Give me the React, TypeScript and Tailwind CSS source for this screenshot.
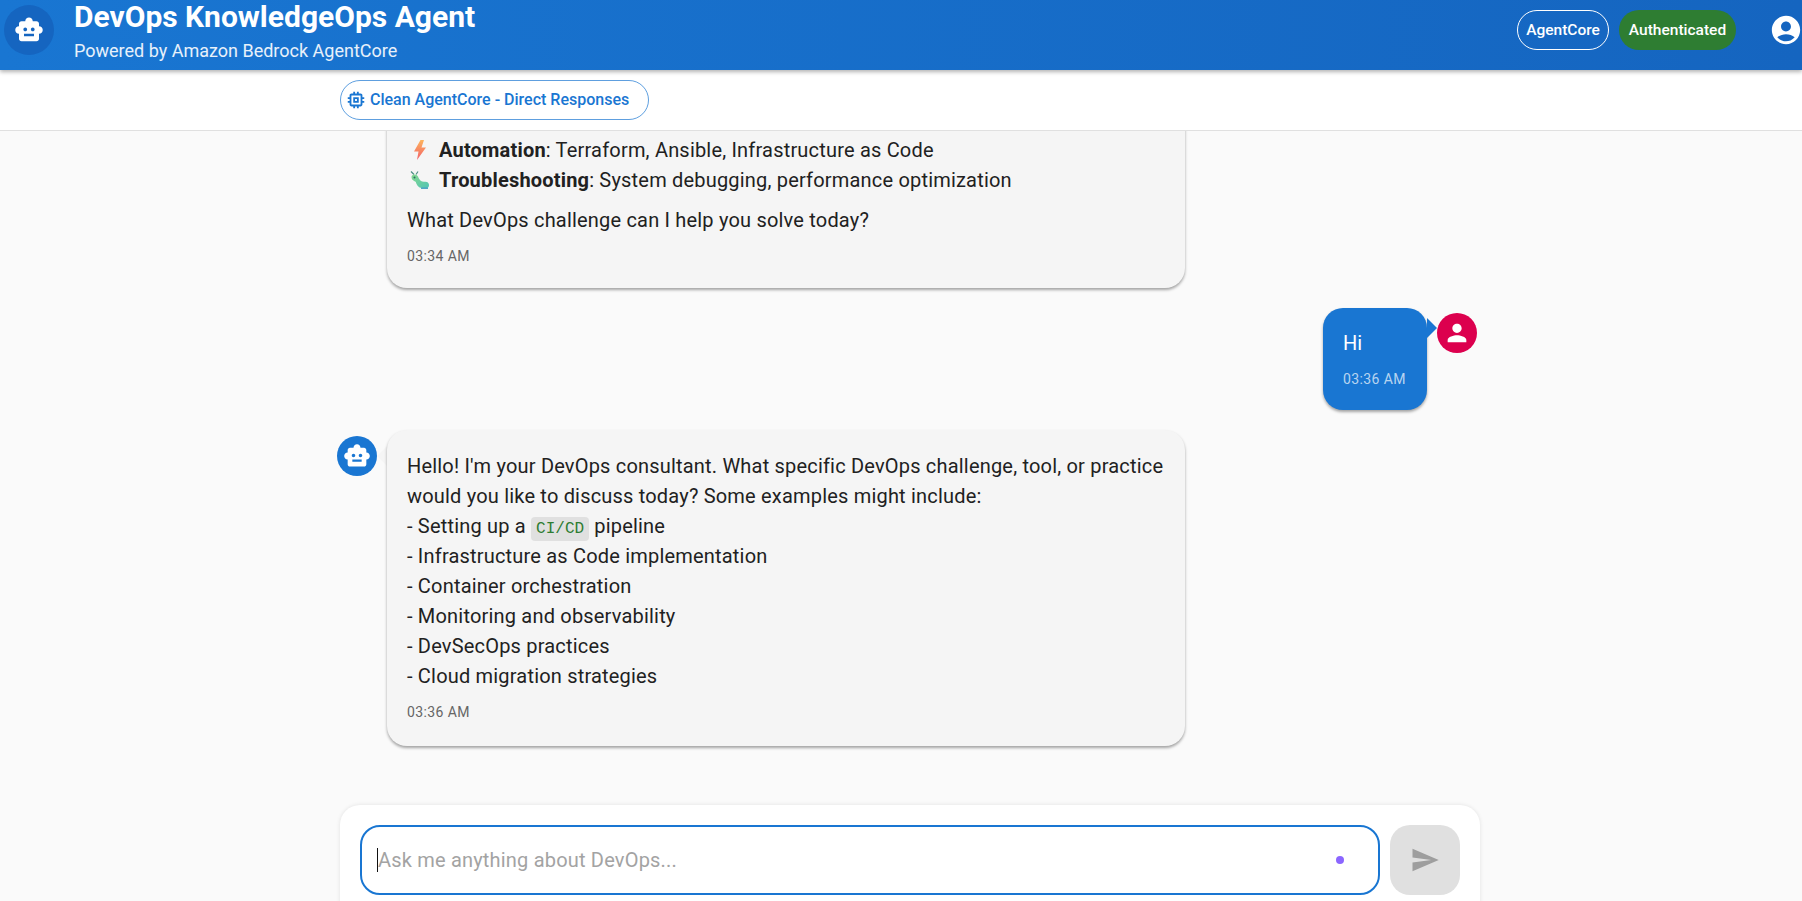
const SMART_TOY =
  "M20 9V7c0-1.1-.9-2-2-2h-3c0-1.66-1.34-3-3-3S9 3.34 9 5H6c-1.1 0-2 .9-2 2v2c-1.66 0-3 1.34-3 3s1.34 3 3 3v4c0 1.1.9 2 2 2h12c1.1 0 2-.9 2-2v-4c1.66 0 3-1.34 3-3s-1.34-3-3-3zM7.5 11.5c0-.83.67-1.5 1.5-1.5s1.5.67 1.5 1.5S9.83 13 9 13s-1.5-.67-1.5-1.5zM16 17H8v-2h8v2zm-1-4c-.83 0-1.5-.67-1.5-1.5S14.17 10 15 10s1.5.67 1.5 1.5S15.83 13 15 13z";
const PERSON =
  "M12 12c2.21 0 4-1.79 4-4s-1.79-4-4-4-4 1.79-4 4 1.79 4 4 4zm0 2c-2.67 0-8 1.34-8 4v2h16v-2c0-2.66-5.33-4-8-4z";
const ACCOUNT =
  "M12 2C6.48 2 2 6.48 2 12s4.48 10 10 10 10-4.48 10-10S17.52 2 12 2zm0 4c1.93 0 3.5 1.57 3.5 3.5S13.93 13 12 13s-3.5-1.57-3.5-3.5S10.07 6 12 6zm0 14c-2.03 0-4.43-.82-6.14-2.88C7.55 15.8 9.68 15 12 15s4.45.8 6.14 2.12C16.43 19.18 14.03 20 12 20z";
const SEND = "M2.01 21 23 12 2.01 3 2 10l15 2-15 2z";
const MEMORY =
  "M15 9H9v6h6V9zm-2 4h-2v-2h2v2zm8-2V9h-2V7c0-1.1-.9-2-2-2h-2V3h-2v2h-2V3H9v2H7c-1.1 0-2 .9-2 2v2H3v2h2v2H3v2h2v2c0 1.1.9 2 2 2h2v2h2v-2h2v2h2v-2h2c1.1 0 2-.9 2-2v-2h2v-2h-2v-2h2zm-4 6H7V7h10v10z";

function Icon({ d, className }: { d: string; className: string }) {
  return (
    <svg viewBox="0 0 24 24" fill="currentColor" className={className}>
      <path d={d} />
    </svg>
  );
}

function BoltEmoji() {
  return (
    <svg viewBox="0 0 12 20" className="w-[12px] h-[20px] shrink-0">
      <defs>
        <linearGradient id="bolt" x1="0" y1="0" x2="0" y2="1">
          <stop offset="0" stopColor="#fdb45c" />
          <stop offset="1" stopColor="#f2606a" />
        </linearGradient>
      </defs>
      <path d="M6.500 0 0 11.500h4.500L3 20 12 7.500H7.500L10 0z" fill="url(#bolt)" />
    </svg>
  );
}

function BugEmoji() {
  return (
    <svg viewBox="0 0 20 18" className="w-[20px] h-[18px] shrink-0">
      <defs>
        <linearGradient id="bug" x1="0" y1="0" x2="1" y2="1">
          <stop offset="0" stopColor="#86d98f" />
          <stop offset="1" stopColor="#52c4b4" />
        </linearGradient>
      </defs>
      <path d="M1 0.500 4 3.500M8 0.500 6 3.500" stroke="#4f8f86" strokeWidth="1.2" fill="none" />
      <path
        d="M1.500 6c0-3 5-3.600 6.500-.4.900 2 1.500 3.400 3 4.300 1.500 1 4 .400 6 1.200 2.500 1 2.700 5 .4 5.900H12c-3.600 0-5.500-3.500-6.200-6C4.400 10 1.500 9 1.500 6z"
        fill="url(#bug)"
      />
      <circle cx="4.500" cy="6.500" r="1" fill="#2d6a62" />
      <path d="M11 17.200h7" stroke="#4aa3c4" strokeWidth="1.500" />
    </svg>
  );
}

function BotBubble({ children, time, className }: { children: React.ReactNode; time: string; className?: string }) {
  return (
    <div className={`relative w-[798px] bg-[#f5f5f5] rounded-[20px] px-5 shadow-[0_2px_3px_rgba(0,0,0,0.35)] ${className ?? ""}`}>
      <div className="text-[20px] leading-[30px] tracking-[0.19px] text-[#212121]">{children}</div>
      <div className="mt-[11px] text-[14px] leading-[20px] tracking-[0.4px] text-[#666666]">{time}</div>
    </div>
  );
}

export default function App() {
  return (
    <div className="h-screen flex flex-col overflow-hidden bg-[#fafafa] font-['Roboto',sans-serif]">
      <header className="relative z-10 h-[70px] shrink-0 flex items-start pl-[4px] pr-0 pt-[5px] gap-5 text-white bg-gradient-to-r from-[#1976d2] to-[#1565c0] shadow-[0_2px_4px_rgba(0,0,0,0.3)]">
        <div className="w-[50px] h-[50px] rounded-full bg-[#1565c0] flex items-center justify-center">
          <Icon d={SMART_TOY} className="w-[30px] h-[30px] text-white" />
        </div>
        <div className="flex-1 -mt-[5px]">
          <h1 className="text-[30px] leading-[34px] font-bold">DevOps KnowledgeOps Agent</h1>
          <p className="text-[18px] leading-[20px] mt-[7px] text-white/90">Powered by Amazon Bedrock AgentCore</p>
        </div>
        <div className="flex items-center h-[50px] -mr-[1px]">
          <span className="h-[40px] w-[92px] pt-[1px] flex items-center justify-center rounded-full border border-white text-[15.5px] font-medium">AgentCore</span>
          <span className="ml-[10px] h-[40px] w-[117px] pt-[1px] flex items-center justify-center rounded-full bg-[#2e7d32] text-[15.5px] font-medium">Authenticated</span>
          <Icon d={ACCOUNT} className="ml-[33px] w-[34px] h-[34px] text-white" />
        </div>
      </header>

      <div className="h-[61px] shrink-0 bg-white border-b border-[#e0e0e0] pl-[340px] flex items-center">
        <span className="h-[40px] w-[309px] flex items-center rounded-full border border-[#1976d2]/70 pl-[4px] gap-[3px] text-[#1976d2] text-[16px] font-medium">
          <Icon d={MEMORY} className="w-[22px] h-[22px]" />
          Clean AgentCore - Direct Responses
        </span>
      </div>

      <main className="flex-1 min-h-0 overflow-hidden flex flex-col justify-end pl-[337px] pr-[325px] pb-[59px] gap-5">
        <div className="flex ml-[50px]">
          <BotBubble time="03:34 AM" className="pt-[30px] pb-[22px]">
            <div className="flex items-center">
              <span className="w-[33px] -ml-[1px] flex justify-center pr-[5px]"><BoltEmoji /></span>
              <span><b className="font-bold">Automation</b>: Terraform, Ansible, Infrastructure as Code</span>
            </div>
            <div className="flex items-center">
              <span className="w-[33px] -ml-[1px] flex justify-center pr-[5px]"><BugEmoji /></span>
              <span><b className="font-bold">Troubleshooting</b>: System debugging, performance optimization</span>
            </div>
            <p className="mt-[10px]">What DevOps challenge can I help you solve today?</p>
          </BotBubble>
        </div>

        <div className="flex justify-end items-start">
          <div className="relative w-[104px] h-[102px] bg-[#1976d2] rounded-[20px] px-5 pt-[18px] text-white shadow-[0_2px_3px_rgba(0,0,0,0.35)]">
            <div className="text-[20px] leading-[34px]">Hi</div>
            <div className="mt-[9px] text-[14px] leading-[20px] tracking-[0.4px] text-white/70">03:36 AM</div>
            <span className="absolute left-full top-[10px] border-y-[10px] border-l-[10px] border-y-transparent border-l-[#1976d2]" />
          </div>
          <div className="ml-[10px] mt-[5px] w-[40px] h-[40px] rounded-full bg-[#dc004e] flex items-center justify-center">
            <Icon d={PERSON} className="w-[28px] h-[28px] text-white" />
          </div>
        </div>

        <div className="flex items-start">
          <div className="mt-[6px] w-[40px] h-[40px] rounded-full bg-[#1976d2] flex items-center justify-center">
            <Icon d={SMART_TOY} className="w-[28px] h-[28px] text-white" />
          </div>
          <div className="relative ml-[10px]">
            <span className="absolute right-full top-[16px] border-y-[10px] border-r-[10px] border-y-transparent border-r-[#f5f5f5]" />
            <BotBubble time="03:36 AM" className="pt-[21px] pb-[24px]">
              <p>Hello! I'm your DevOps consultant. What specific DevOps challenge, tool, or practice would you like to discuss today? Some examples might include:</p>
              <p>
                - Setting up a{" "}
                <code className="font-['Liberation_Mono',monospace] text-[16px] leading-[18px] tracking-normal text-[#2e7d32] bg-[#e0e0e0] rounded-[4px] px-[5px] py-[3px]">CI/CD</code>{" "}
                pipeline
              </p>
              <p>- Infrastructure as Code implementation</p>
              <p>- Container orchestration</p>
              <p>- Monitoring and observability</p>
              <p>- DevSecOps practices</p>
              <p>- Cloud migration strategies</p>
            </BotBubble>
          </div>
        </div>
      </main>

      <div className="h-[96px] shrink-0 pl-[340px]">
        <div className="w-[1140px] h-[120px] bg-white rounded-[20px] shadow-[0_0_4px_rgba(0,0,0,0.1)] pt-[20px] pl-[20px] flex gap-[10px]">
          <div className="relative w-[1020px] h-[70px] rounded-[20px] border-2 border-[#1976d2] flex items-center pl-[15px]">
            <span className="w-px h-[24px] bg-[#111111]" />
            <span className="text-[20px] tracking-[0.19px] text-[#a3a3a3]">Ask me anything about DevOps...</span>
            <span className="absolute right-[34px] top-[29px] w-[8px] h-[8px] rounded-full bg-[#8b66ff]" />
          </div>
          <div className="w-[70px] h-[70px] rounded-[20px] bg-[#e0e0e0] flex items-center justify-center">
            <Icon d={SEND} className="w-[30px] h-[30px] text-[#9e9e9e]" />
          </div>
        </div>
      </div>
    </div>
  );
}
